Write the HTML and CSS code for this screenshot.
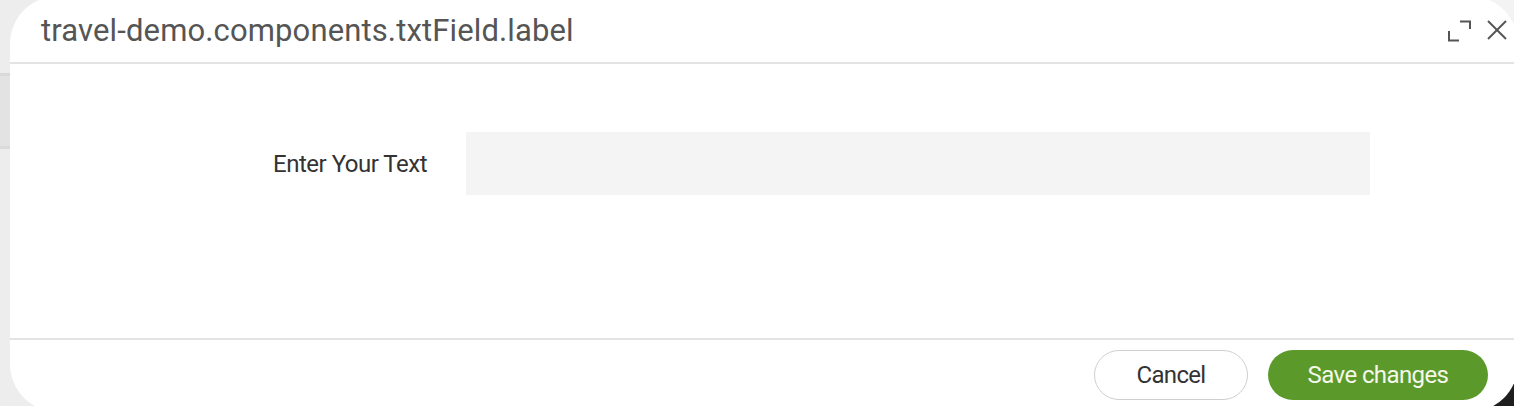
FILE: index.html
```html
<!DOCTYPE html>
<html lang="en">
<head>
    <meta charset="UTF-8">
    <meta name="viewport" content="width=device-width, initial-scale=1.0">
    <title>Edit label</title>
    <link rel="stylesheet" href="styles.css">
</head>
<body>

    <div class="page-behind">
        <div class="page-band"></div>
        <div class="page-corner"></div>
    </div>

    <div class="modal">
        <div class="modal-header">
            <h2 class="modal-title">travel-demo.components.txtField.label</h2>
            <div class="modal-tools">
                <button class="icon-btn" title="Maximize">
                    <svg width="24" height="24" viewBox="0 0 24 24" fill="none" stroke="#555" stroke-width="2">
                        <polyline points="12,3.5 22,3.5 22,11"/>
                        <polyline points="1,13 1,22.5 11,22.5"/>
                    </svg>
                </button>
                <button class="icon-btn" title="Close">
                    <svg width="22" height="22" viewBox="0 0 22 22" fill="none" stroke="#555" stroke-width="2">
                        <line x1="2" y1="2" x2="20" y2="20"/>
                        <line x1="20" y1="2" x2="2" y2="20"/>
                    </svg>
                </button>
            </div>
        </div>

        <div class="modal-body">
            <div class="form-row">
                <label for="txtValue">Enter Your Text</label>
                <input type="text" id="txtValue">
            </div>
        </div>

        <div class="modal-footer">
            <button class="btn btn-cancel">Cancel</button>
            <button class="btn btn-save">Save changes</button>
        </div>
    </div>

</body>
</html>
```

FILE: styles.css
```css
body {
    font-family: Roboto, "Liberation Sans", sans-serif;
    margin: 0;
    padding: 0;
    width: 1514px;
    height: 406px;
    overflow: hidden;
    background-color: #efefef;
    position: relative;
}

.page-behind {
    height: 100%;
    background: linear-gradient(to right, #ededed, #f3f3f3);
}

.page-band {
    position: absolute;
    left: 0;
    top: 73px;
    width: 40px;
    height: 70px;
    background-color: #e3e3e3;
    border-top: 3px solid #d9d9d9;
    border-bottom: 3px solid #dadada;
}

.page-corner {
    position: absolute;
    right: 0;
    bottom: 0;
    width: 70px;
    height: 40px;
    background-color: #1e1e1e;
}

.modal {
    position: absolute;
    left: 10px;
    top: -4px;
    width: 1508px;
    height: 416px;
    background-color: #fff;
    border-radius: 48px;
    display: flex;
    flex-direction: column;
    overflow: hidden;
}

.modal-header {
    height: 66px;
    display: flex;
    align-items: center;
    justify-content: space-between;
    padding: 0 10px 0 31px;
    border-bottom: 2px solid #e3e3e3;
}

.modal-title {
    margin: 0;
    font-size: 31px;
    font-weight: 400;
    color: #555;
    letter-spacing: 0.13px;
    padding-top: 2px;
}

.modal-tools {
    display: flex;
    align-items: center;
    gap: 14px;
    padding-top: 2px;
}

.icon-btn {
    background: none;
    border: none;
    padding: 0;
    cursor: pointer;
    display: flex;
}

.modal-body {
    height: 274px;
    border-bottom: 2px solid #e3e3e3;
}

.form-row {
    display: flex;
    align-items: center;
    margin-top: 68px;
}

.form-row label {
    width: 417px;
    text-align: right;
    font-size: 24px;
    color: #333;
    letter-spacing: -0.5px;
}

.form-row input {
    margin-left: 39px;
    width: 904px;
    height: 63px;
    border: none;
    background-color: #f4f4f4;
    outline: none;
    padding: 0 12px;
    box-sizing: border-box;
    font-family: inherit;
    font-size: 20px;
}

.modal-footer {
    display: flex;
    justify-content: flex-end;
    gap: 20px;
    padding: 10px 30px 0 0;
}

.btn {
    height: 50px;
    border-radius: 25px;
    font-family: inherit;
    font-size: 24px;
    letter-spacing: -0.7px;
    cursor: pointer;
}

.btn-cancel {
    width: 154px;
    background-color: #fff;
    color: #333;
    border: 1.5px solid #cfcfcf;
}

.btn-save {
    width: 220px;
    background-color: #5b9a2a;
    color: #f4f7ea;
    border: none;
    letter-spacing: -0.6px;
}

.btn-save:hover {
    background-color: #4f8a22;
}
```
